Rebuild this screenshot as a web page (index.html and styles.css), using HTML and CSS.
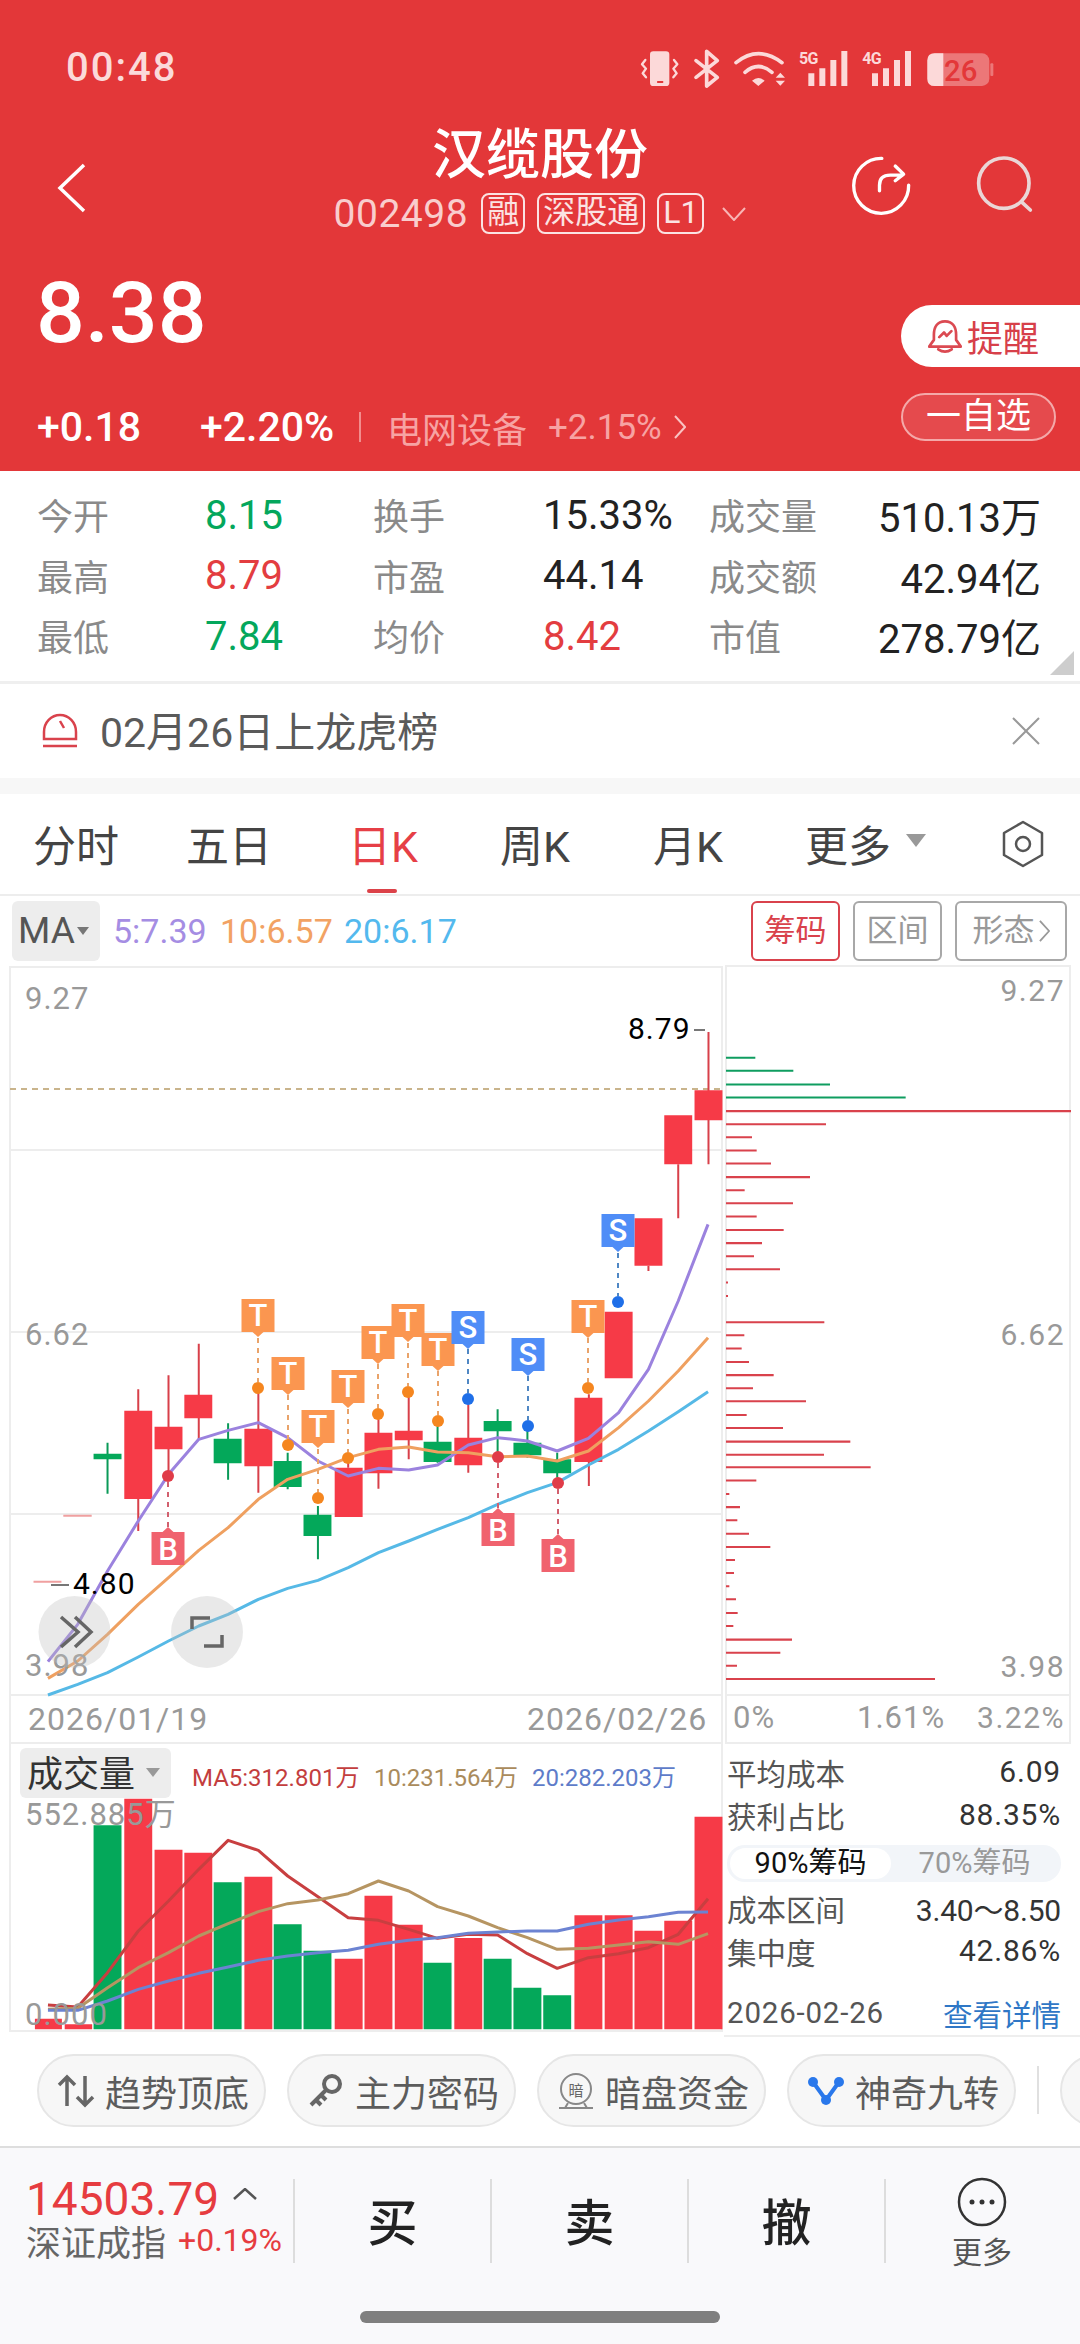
FILE: index.html
```html
<!DOCTYPE html>
<html lang="zh-CN">
<head>
<meta charset="utf-8">
<title>汉缆股份</title>
<link rel="stylesheet" href="styles.css">
</head>
<body>
<div class="app">
  <header class="top">
    <div class="status">
      <span class="time">00:48</span>
      <svg class="status-icons" viewBox="0 0 1110 180" width="370" height="60">
        <rect class="si-fill" x="60" y="34" width="58" height="104" rx="10"/>
        <rect class="si-slot" x="81" y="123" width="19" height="6" rx="2"/>
        <path class="si-line" d="M46 60 36 73 48 86 38 100 48 112M132 60 142 73 130 86 140 100 130 112"/>
        <path class="si-line thick" d="M198 62 262 112 230 138V34L262 62 198 112"/>
        <path class="si-line thick" d="M318 68Q385 14 456 68M345 97Q385 62 426 97"/>
        <path class="si-fill" d="M366 122Q385 106 404 122L385 138ZM437 113 451 98 465 113ZM437 122H465L451 137Z"/>
        <text class="si-net" x="507" y="72">5G</text>
        <path class="si-fill" d="M535 100h18v38h-18zM568 85h18v53h-18zM601 60h18v78h-18zM634 33h18v105h-18z"/>
        <text class="si-net" x="697" y="72">4G</text>
        <path class="si-fill" d="M726 100h18v38h-18zM759 85h18v53h-18zM792 60h18v78h-18zM825 33h18v105h-18z"/>
        <rect class="si-batt" x="892" y="40" width="186" height="98" rx="22"/>
        <rect class="si-batt" x="1081" y="70" width="9" height="38" rx="3"/>
        <path class="si-fill" d="M914 40H940V138H914Q892 138 892 116V62Q892 40 914 40Z"/>
        <text class="si-level" x="992" y="122">26</text>
      </svg>
    </div>
    <div class="nav">
      <svg class="back" viewBox="0 0 30 50" width="30" height="50"><path d="M27 2 3 25 27 48"/></svg>
      <div class="name">
        <h1>汉缆股份</h1>
        <div class="sub">
          <span class="code">002498</span>
          <span class="tag">融</span>
          <span class="tag">深股通</span>
          <span class="tag">L1</span>
          <svg class="sub-arrow" viewBox="0 0 24 14" width="24" height="14"><path d="M1 1 12 13 23 1"/></svg>
        </div>
      </div>
      <div class="actions">
        <svg viewBox="30 15 185 185" width="62" height="62" class="share"><path d="M125 25A82 82 0 1 0 205 105M118 122V105Q118 75 150 75H185M165 48 190 72 165 92"/></svg>
        <svg viewBox="405 20 170 175" width="57" height="58" class="search"><circle cx="488" cy="105" r="76"/><path d="M542 162 568 186"/></svg>
      </div>
    </div>
    <div class="quote">
      <div class="quote-left">
        <div class="price">8.38</div>
        <div class="change">
          <span class="chg-a">+0.18</span>
          <span class="chg-b">+2.20%</span>
          <span class="sector">电网设备</span>
          <span class="sector-chg">+2.15%</span>
          <svg class="sector-arrow" viewBox="0 0 12 24" width="12" height="24"><path d="M1 1 11 12 1 23"/></svg>
        </div>
      </div>
      <div class="quote-right">
        <div class="remind">
          <svg viewBox="265 508 100 104" width="34" height="35"><path d="M315 515C290 515 282 535 282 555V570L268 590H362L348 570V555C348 535 340 515 315 515ZM295 598Q315 612 335 598M298 562 312 548 320 558 334 544"/></svg>
          <span>提醒</span>
        </div>
        <div class="watch">一自选</div>
      </div>
    </div>
  </header>

  <section class="stats">
    <span class="lb">今开</span><span class="val green">8.15</span><span class="lb">换手</span><span class="val">15.33%</span><span class="lb">成交量</span><span class="val end">510.13万</span>
    <span class="lb">最高</span><span class="val red">8.79</span><span class="lb">市盈</span><span class="val">44.14</span><span class="lb">成交额</span><span class="val end">42.94亿</span>
    <span class="lb">最低</span><span class="val green">7.84</span><span class="lb">均价</span><span class="val red">8.42</span><span class="lb">市值</span><span class="val end">278.79亿</span>
    <i class="corner"></i>
  </section>

  <section class="alert">
    <svg viewBox="0 0 38 38" width="38" height="38"><path d="M3 27V20A16 17 0 0 1 35 20V27ZM2 34H36M19 9 23 16"/></svg>
    <span class="alert-text">02月26日上龙虎榜</span>
    <svg class="alert-x" viewBox="0 0 28 28" width="28" height="28"><path d="M1 1 27 27M27 1 1 27"/></svg>
  </section>

  <nav class="tabs">
    <span class="tab t1">分时</span>
    <span class="tab t2">五日</span>
    <span class="tab t3 on">日K</span>
    <span class="tab t4">周K</span>
    <span class="tab t5">月K</span>
    <span class="tab t6">更多</span>
    <i class="tab-caret"></i>
    <svg class="hex" viewBox="0 0 44 48" width="44" height="48"><path d="M22 2 41 13V35L22 46 3 35V13Z"/><circle cx="22" cy="24" r="7"/></svg>
  </nav>

  <section class="ma">
    <div class="ma-btn"><span>MA</span><i></i></div>
    <span class="m5">5:7.39</span>
    <span class="m10">10:6.57</span>
    <span class="m20">20:6.17</span>
    <div class="ma-right">
      <span class="chip-s on">筹码</span>
      <span class="chip-s">区间</span>
      <span class="chip-s wide">形态<svg viewBox="0 0 12 24" width="11" height="22"><path d="M1 1 11 12 1 23"/></svg></span>
    </div>
  </section>

  <section class="charts">
    <svg class="left-chart" viewBox="0 964 724 1068" width="724" height="1068">
      <path class="frame" d="M10 966H722V2030H10ZM10 1149H722M10 1331H722M10 1513H722M10 1694H722M10 1742H722"/>
      <path class="last" d="M10 1088H722"/>
      <text class="ax" x="25" y="1008">9.27</text>
      <text class="ax" x="25" y="1344">6.62</text>
      <g transform="translate(0 1340) scale(.4655 .33333)">
        <path class="wick-r" d="M297 145V570M362 103V420M427 8V295M555 150V455M748 360V380M813 235V443M878 165V355M1006 190V395M1265 160V435M1393 -226V-210M1457 -530V-368M1522 -927V-530"/>
        <path class="wick-g" d="M231 305V458M490 247V416M618 335V445M683 495V655M940 255V365M1069 205V335M1133 270V350M1197 335V410"/>
        <path class="wick-p" d="M136 524H197M72 722H132"/>
        <path class="body-g" d="M201 338h60v17h-60zM459 293h60v74h-60zM588 360h60v78h-60zM652 521h60v64h-60zM910 302h60v61h-60zM1039 240h60v31h-60zM1103 305h60v38h-60zM1167 355h60v42h-60z"/>
        <path class="body-r" d="M267 209h60v265h-60zM332 257h60v68h-60zM396 161h60v71h-60zM525 263h60v113h-60zM719 380h60v148h-60zM783 275h60v122h-60zM848 269h60v29h-60zM976 290h60v83h-60zM1234 170h60v193h-60zM1299 -88h60v200h-60zM1363 -368h60v142h-60zM1427 -677h60v147h-60zM1492 -752h60v90h-60z"/>
        <polyline class="ln lp" points="103,962 167,850 231,690 297,540 362,400 427,295 490,268 555,245 618,290 683,360 748,405 813,382 878,387 940,372 1006,312 1069,290 1133,300 1197,330 1264,292 1329,215 1393,85 1457,-120 1521,-350"/>
        <polyline class="ln lo" points="103,1012 167,960 231,880 297,790 362,710 427,628 490,560 555,475 618,415 683,385 748,350 813,325 878,318 940,333 1006,335 1069,347 1133,345 1197,360 1264,330 1329,260 1393,180 1457,90 1521,-10"/>
        <polyline class="ln lb2" points="103,1062 167,1030 231,995 297,948 362,900 427,855 490,820 555,775 618,742 683,718 748,680 813,635 878,600 940,565 1006,530 1069,490 1133,455 1197,425 1264,372 1329,325 1393,270 1457,212 1521,152"/>
      </g>

      <path class="dash-o" d="M258 1337V1381M288 1394V1438M318 1448V1491M348 1408V1451M378 1363V1407M408 1342V1385M438 1370V1414M588 1337V1381"/>
      <path class="dash-b" d="M468 1348V1392M528 1375V1419M618 1252V1295"/>
      <path class="dash-r" d="M168 1481V1526M498 1462V1507M558 1488V1533"/>
      <g class="dot-o"><circle cx="258" cy="1387" r="6"/><circle cx="288" cy="1444" r="6"/><circle cx="318" cy="1497" r="6"/><circle cx="348" cy="1457" r="6"/><circle cx="378" cy="1413" r="6"/><circle cx="408" cy="1391" r="6"/><circle cx="438" cy="1420" r="6"/><circle cx="588" cy="1387" r="6"/></g>
      <g class="dot-b"><circle cx="468" cy="1398" r="6"/><circle cx="528" cy="1425" r="6"/><circle cx="618" cy="1301" r="6"/></g>
      <g class="dot-r"><circle cx="168" cy="1475" r="6"/><circle cx="498" cy="1456" r="6"/><circle cx="558" cy="1482" r="6"/></g>

      <g class="flag ft" transform="translate(258 1298)"><path d="M-16.5 0h33v33h-11l-5.500 5-5.500-5h-11z"/><text y="27">T</text></g>
      <g class="flag ft" transform="translate(288 1356)"><path d="M-16.5 0h33v33h-11l-5.500 5-5.500-5h-11z"/><text y="27">T</text></g>
      <g class="flag ft" transform="translate(318 1409)"><path d="M-16.5 0h33v33h-11l-5.500 5-5.500-5h-11z"/><text y="27">T</text></g>
      <g class="flag ft" transform="translate(348 1369)"><path d="M-16.5 0h33v33h-11l-5.500 5-5.500-5h-11z"/><text y="27">T</text></g>
      <g class="flag ft" transform="translate(378 1325)"><path d="M-16.5 0h33v33h-11l-5.500 5-5.500-5h-11z"/><text y="27">T</text></g>
      <g class="flag ft" transform="translate(408 1303)"><path d="M-16.5 0h33v33h-11l-5.500 5-5.500-5h-11z"/><text y="27">T</text></g>
      <g class="flag ft" transform="translate(438 1332)"><path d="M-16.5 0h33v33h-11l-5.500 5-5.500-5h-11z"/><text y="27">T</text></g>
      <g class="flag ft" transform="translate(588 1299)"><path d="M-16.5 0h33v33h-11l-5.500 5-5.500-5h-11z"/><text y="27">T</text></g>
      <g class="flag fs" transform="translate(468 1310)"><path d="M-16.5 0h33v33h-11l-5.500 5-5.500-5h-11z"/><text y="27">S</text></g>
      <g class="flag fs" transform="translate(528 1337)"><path d="M-16.5 0h33v33h-11l-5.500 5-5.500-5h-11z"/><text y="27">S</text></g>
      <g class="flag fs" transform="translate(618 1213)"><path d="M-16.5 0h33v33h-11l-5.500 5-5.500-5h-11z"/><text y="27">S</text></g>
      <g class="flag fb" transform="translate(168 1526)"><path d="M-16.500 5h11l5.500-5 5.500 5h11v33h-33z"/><text y="33">B</text></g>
      <g class="flag fb" transform="translate(498 1507)"><path d="M-16.500 5h11l5.500-5 5.500 5h11v33h-33z"/><text y="33">B</text></g>
      <g class="flag fb" transform="translate(558 1533)"><path d="M-16.500 5h11l5.500-5 5.500 5h11v33h-33z"/><text y="33">B</text></g>

      <text class="mark" x="628" y="1038">8.79</text>
      <path class="mark-dash" d="M694 1029H705M51 1584H69"/>
      <text class="mark" x="73" y="1593">4.80</text>
      <text class="ax" x="25" y="1675">3.98</text>
      <circle class="float" cx="74.500" cy="1631" r="36"/>
      <circle class="float" cx="207" cy="1631" r="36"/>
      <path class="float-ic" d="M61 1616 78 1631 61 1646M75 1616 91 1631 75 1646M192 1628V1617H210M222 1634V1645H204"/>
      <text class="ax date" x="28" y="1729">2026/01/19</text>
      <text class="ax date" x="527" y="1729">2026/02/26</text>

      <g transform="translate(0 1730) scale(.4655 .33333)">
        <path class="body-r" d="M75 863h58v32h-58zM139 880h59v15h-59zM267 203h60v692h-60zM332 356h60v539h-60zM396 365h60v530h-60zM525 437h60v458h-60zM719 683h60v212h-60zM783 494h60v401h-60zM848 581h60v314h-60zM976 621h60v274h-60zM1234 553h60v342h-60zM1299 553h60v342h-60zM1363 599h60v296h-60zM1427 569h60v326h-60zM1492 257h60v638h-60z"/>
        <path class="body-g" d="M201 283h60v612h-60zM459 454h60v441h-60zM588 580h60v315h-60zM652 659h60v236h-60zM910 695h60v200h-60zM1039 683h60v212h-60zM1103 770h60v125h-60zM1167 793h60v102h-60z"/>
        <polyline class="ln vr" points="103,822 167,828 231,725 297,600 362,510 427,415 490,328 555,358 618,435 683,497 748,560 813,568 878,595 940,622 1006,610 1069,612 1133,668 1197,712 1264,680 1329,668 1393,650 1457,610 1521,503"/>
        <polyline class="ln vt" points="103,835 167,832 231,770 297,710 362,665 427,615 490,578 555,542 618,518 683,507 748,488 813,450 878,480 940,527 1006,555 1069,590 1133,620 1197,655 1264,652 1329,642 1393,632 1457,640 1521,608"/>
        <polyline class="ln vb" points="103,838 167,838 231,810 297,775 362,750 427,727 490,708 555,688 618,675 683,665 748,658 813,640 878,628 940,620 1006,607 1069,603 1133,600 1197,600 1264,580 1329,567 1393,557 1457,544 1521,543"/>
      </g>
      <rect class="vol-btn" x="20" y="1747" width="151" height="50" rx="6"/>
      <text class="vol-title" x="27" y="1786">成交量</text>
      <path class="vol-caret" d="M146 1767H160L153 1776Z"/>
      <text class="vm vm1" x="192" y="1785">MA5:312.801万</text>
      <text class="vm vm2" x="374" y="1785">10:231.564万</text>
      <text class="vm vm3" x="532" y="1785">20:282.203万</text>
      <text class="ax" x="25" y="1824">552.885万</text>
      <text class="ax" x="25" y="2024">0.000</text>
    </svg>

    <div class="right-col">
      <svg class="chip-chart" viewBox="724 964 356 780" width="356" height="780">
        <path class="frame" d="M726 965H1070V1742H726ZM726 1694H1070"/>
        <g transform="translate(710 960) scale(.33333 .50380)">
          <path class="chip-g" d="M48 192H136M48 218H250M48 245H360M48 271H587"/>
          <path class="chip-r" d="M48 298H1083M48 324H348M48 350H126M48 376H140M48 402H183M48 429H300M48 455H104M48 481H249M48 507H140M48 534H221M48 560H156M48 586H132M48 612H210M48 638H54M48 665H54M48 717H343M48 743H103M48 769H95M48 796H117M48 822H191M48 848H129M48 874H288M48 901H110M48 927H219M48 954H421M48 980H342M48 1005H482M48 1031H139M48 1058H58M48 1084H90M48 1110H82M48 1137H117M48 1163H181M48 1189H75M48 1215H72M48 1241H58M48 1267H78M48 1294H83M48 1320H70M48 1347H246M48 1373H211M48 1399H81M48 1425H675"/>
        </g>
        <text class="ax end" x="1065" y="1000">9.27</text>
        <text class="ax end" x="1065" y="1344">6.62</text>
        <text class="ax end" x="1065" y="1676">3.98</text>
        <text class="ax" x="733" y="1727">0%</text>
        <text class="ax" x="857" y="1727">1.61%</text>
        <text class="ax end" x="1065" y="1727">3.22%</text>
      </svg>
      <div class="cost">
        <div class="cost-row"><span>平均成本</span><b>6.09</b></div>
        <div class="cost-row"><span>获利占比</span><b>88.35%</b></div>
        <div class="seg"><span class="seg-on">90%筹码</span><span class="seg-off">70%筹码</span></div>
        <div class="cost-row"><span>成本区间</span><b class="tight">3.40～8.50</b></div>
        <div class="cost-row"><span>集中度</span><b>42.86%</b></div>
        <div class="cost-foot"><span>2026-02-26</span><a>查看详情</a></div>
      </div>
    </div>
  </section>

  <section class="pills">
    <div class="pill">
      <svg viewBox="0 0 38 34" width="38" height="34" class="ic-arrows"><path d="M10 32V3M2 11 10 3 18 11M28 2V31M20 23 28 31 36 23"/></svg>
      <span>趋势顶底</span>
    </div>
    <div class="pill">
      <svg viewBox="0 0 38 38" width="38" height="38" class="ic-key"><circle cx="25" cy="12" r="8"/><path d="M19 18 4 33M9 28 14 33M14 23 19 28"/></svg>
      <span>主力密码</span>
    </div>
    <div class="pill">
      <svg viewBox="0 0 38 38" width="38" height="38" class="ic-dark"><circle cx="19" cy="17" r="15"/><path d="M2 36H36M11 31 8 36M27 31 30 36"/><text x="19" y="24">暗</text></svg>
      <span>暗盘资金</span>
    </div>
    <div class="pill">
      <svg viewBox="0 0 38 34" width="38" height="34" class="ic-nine"><path d="M6 8 19 26 32 8"/><circle cx="6" cy="8" r="5"/><circle cx="32" cy="8" r="5"/><circle cx="19" cy="26" r="5"/></svg>
      <span>神奇九转</span>
    </div>
    <i class="pill-sep"></i>
    <div class="pill">
      <svg viewBox="0 0 38 34" width="38" height="34" class="ic-nine"><circle cx="6" cy="17" r="6"/></svg>
    </div>
  </section>

  <footer class="foot">
    <div class="foot-row">
      <div class="index">
        <div class="idx-top"><span class="idx-val">14503.79</span><svg viewBox="0 0 24 12" width="24" height="12"><path d="M1 11 12 1 23 11"/></svg></div>
        <div class="idx-sub"><span class="idx-name">深证成指</span><span class="idx-chg">+0.19%</span></div>
      </div>
      <div class="act">买</div>
      <div class="act">卖</div>
      <div class="act">撤</div>
      <div class="more">
        <svg viewBox="0 0 50 50" width="50" height="50"><circle class="ring" cx="25" cy="25" r="23"/><circle cx="15" cy="25" r="2.500"/><circle cx="25" cy="25" r="2.500"/><circle cx="35" cy="25" r="2.500"/></svg>
        <span>更多</span>
      </div>
    </div>
    <div class="home"></div>
  </footer>
</div>
</body>
</html>
```
FILE: styles.css
```css
* { box-sizing: border-box; }
html, body { margin: 0; padding: 0; background: #fff; }
body { font-family: Roboto, "Noto Sans CJK SC", sans-serif; }
.app { width: 1080px; height: 2344px; overflow: hidden; display: flex; flex-direction: column; }
.app > * { flex: none; }
svg { display: block; flex: none; }
text { font-family: Roboto, "Noto Sans CJK SC", sans-serif; }

/* header */
.top { height: 471px; background: #E33739; color: #fff; display: flex; flex-direction: column; }
.status { height: 100px; padding: 40px 80px 0 66px; display: flex; justify-content: space-between; align-items: flex-start; }
.time { font-size: 40px; line-height: 56px; font-weight: 500; letter-spacing: 2px; color: #FBDADA; }
.si-fill { fill: #FCD9D9; }
.si-slot { fill: #E33739; }
.si-line { fill: none; stroke: #FCD9D9; stroke-width: 7; stroke-linecap: round; stroke-linejoin: round; }
.si-line.thick { stroke-width: 11; }
.si-net { fill: #FCD9D9; font-size: 48px; font-weight: 700; letter-spacing: -2px; }
.si-batt { fill: rgba(255,255,255,.32); }
.si-level { fill: #E33739; font-size: 88px; font-weight: 500; text-anchor: middle; }

.nav { height: 140px; padding-top: 26px; display: grid; grid-template-columns: 1fr auto 1fr; align-items: start; }
.back { margin: 37px 0 0 57px; }
.back path { fill: none; stroke: #fff; stroke-width: 3.5; }
.name { display: flex; flex-direction: column; align-items: center; }
.name h1 { margin: 0; font-size: 54px; line-height: 60px; font-weight: 500; color: #fff; }
.sub { margin-top: 7px; height: 41px; display: flex; align-items: center; gap: 12px; padding-right: 0; }
.code { font-size: 39px; color: #F9CDCD; letter-spacing: .5px; margin-right: 1px; }
.tag { height: 41px; padding: 0 4px; border: 2px solid #FBE3E3; border-radius: 8px; font-size: 32px; line-height: 35px; color: #FBE3E3; }
.sub-arrow { margin-left: 6px; }
.sub-arrow path { fill: none; stroke: #F9B5B5; stroke-width: 2; }
.actions { display: flex; justify-content: flex-end; gap: 64px; padding: 29px 47px 0 0; }
.share path { fill: none; stroke: #fff; stroke-width: 10; stroke-linecap: round; stroke-linejoin: round; }
.search circle, .search path { fill: none; stroke: #EAD6D6; stroke-width: 11; stroke-linecap: round; }

.quote { flex: 1; display: flex; justify-content: space-between; }
.quote-left { padding: 25px 0 0 36px; }
.price { font-size: 86px; line-height: 96px; font-weight: 500; }
.change { display: flex; align-items: center; height: 40px; margin-top: 46px; margin-left: 1px; }
.chg-a { font-size: 41px; font-weight: 500; width: 163px; }
.chg-b { font-size: 41px; font-weight: 500; width: 161px; border-right: 2px solid #F28D8D; line-height: 30px; height: 30px; display: flex; align-items: center; }
.sector { font-size: 35px; color: #F7A3A3; margin-left: 26px; }
.sector-chg { font-size: 35px; color: #F7A3A3; margin-left: 21px; }
.sector-arrow { margin-left: 12px; }
.sector-arrow path { fill: none; stroke: #F9C2C2; stroke-width: 2; }
.quote-right { width: 179px; padding-top: 65px; display: flex; flex-direction: column; gap: 26px; }
.remind { height: 62px; width: 179px; background: #fff; border-radius: 31px 0 0 31px; display: flex; align-items: center; padding-left: 27px; gap: 5px; color: #D7404A; font-size: 36px; }
.remind path { fill: none; stroke: #DB4A52; stroke-width: 8; stroke-linejoin: round; stroke-linecap: round; }
.watch { height: 48px; width: 155px; border: 2px solid #F4A9A9; border-radius: 24px; background: #E54A4D; font-size: 35px; line-height: 43px; text-align: center; color: #fff; }

/* stats */
.stats { position: relative; height: 213px; padding: 14px 0 0 37px; border-bottom: 3px solid #EFEFEF; display: grid; grid-template-columns: 168px 168px 170px 166px 140px 192px; grid-auto-rows: 60.500px; align-items: center; }
.lb { font-size: 36px; color: #8A8A8A; margin-top: -2px; }
.val { font-size: 40px; color: #222; }
.val.end { justify-self: end; }
.green { color: #04A75C; }
.red { color: #E33D40; }
.corner { position: absolute; right: 6px; bottom: 6px; width: 24px; height: 24px; background: #CDCDCD; clip-path: polygon(100% 0, 100% 100%, 0 100%); }

/* alert */
.alert { height: 94px; display: flex; align-items: center; padding: 0 40px 0 41px; gap: 21px; }
.alert path { fill: none; stroke: #D9424C; stroke-width: 2.500; }
.alert-text { flex: 1; font-size: 41px; color: #5A5A5A; margin-top: -5px; }
.alert .alert-x path { stroke: #999; stroke-width: 2; }

/* tabs */
.tabs { position: relative; border-top: 16px solid #F7F7F7; height: 118px; border-bottom: 2px solid #EDEDED; }
.tab { position: absolute; top: 19px; font-size: 43px; line-height: 68px; color: #444; }
.t1 { left: 33px; } .t2 { left: 186px; } .t3 { left: 348px; } .t4 { left: 500px; } .t5 { left: 653px; } .t6 { left: 805px; }
.tab.on { color: #E63F46; }
.tab.on::after { content: ""; position: absolute; left: 19px; top: 76px; width: 30px; height: 4px; background: #DC4249; border-radius: 2px; }
.tab-caret { position: absolute; left: 906px; top: 40px; border: solid transparent; border-width: 13px 10px 0; border-top-color: #999; }
.hex { position: absolute; left: 1001px; top: 26px; }
.hex path, .hex circle { fill: none; stroke: #555; stroke-width: 2.500; stroke-linejoin: round; }

/* MA row */
.ma { height: 69px; padding: 5px 13px 0 12px; display: flex; align-items: flex-start; font-size: 34px; line-height: 60px; }
.ma-btn { width: 88px; height: 60px; background: #EDEDED; border-radius: 6px; padding-left: 6px; display: flex; align-items: center; color: #555; font-size: 37px; margin-right: 13px; }
.ma-btn i { margin-left: 2px; border: solid transparent; border-width: 8px 6px 0; border-top-color: #777; }
.m5 { color: #A58DE3; width: 107px; }
.m10 { color: #F2A263; width: 124px; }
.m20 { color: #53B9EE; }
.ma-right { margin-left: auto; display: flex; gap: 13px; }
.chip-s { width: 89px; height: 60px; border: 2px solid #A8A8A8; border-radius: 6px; display: flex; align-items: center; justify-content: center; font-size: 31px; color: #999; }
.chip-s.on { border-color: #D9424C; color: #D9424C; }
.chip-s.wide { width: 112px; }
.chip-s path { fill: none; stroke: #999; stroke-width: 2; }
.chip-s svg { margin-left: 4px; }

/* charts */
.charts { height: 1068px; display: flex; }
.frame { fill: none; stroke: #EDEDED; stroke-width: 2; }
.last { fill: none; stroke: #C9B48C; stroke-width: 2; stroke-dasharray: 6 5; }
.ax { font-size: 31px; fill: #999; letter-spacing: 1px; }
.ax.end { font-size: 30px; text-anchor: end; letter-spacing: 1.500px; }
.ax.date { font-size: 32px; letter-spacing: 1px; }
.wick-r, .wick-g, .wick-p, .ln { fill: none; vector-effect: non-scaling-stroke; }
.wick-r { stroke: #D8404A; stroke-width: 2; }
.wick-g { stroke: #0A9A58; stroke-width: 2; }
.wick-p { stroke: #F0A0A0; stroke-width: 2; }
.body-r { fill: #F63A47; }
.body-g { fill: #04A85A; }
.ln { stroke-width: 3; stroke-linejoin: round; }
.lp { stroke: #9B82DE; }
.lo { stroke: #EFA060; }
.lb2 { stroke: #56B9E6; }
.vr { stroke: #C83F40; }
.vt { stroke: #B69562; }
.vb { stroke: #6C83D2; }
.dash-o, .dash-b, .dash-r { fill: none; stroke-width: 2; stroke-dasharray: 5 5; }
.dash-o { stroke: #E9A36A; }
.dash-b { stroke: #4F87C4; }
.dash-r { stroke: #D2606E; }
.dot-o { fill: #F5861F; }
.dot-b { fill: #1F6FE8; }
.dot-r { fill: #E03C48; }
.flag text { fill: #FFF; font-size: 31px; font-weight: 500; text-anchor: middle; }
.ft path { fill: #FB9650; }
.fs path { fill: #4F8DF7; }
.fb path { fill: #F0626E; }
.mark { font-size: 30px; fill: #000; letter-spacing: 1px; }
.mark-dash { fill: none; stroke: #777; stroke-width: 2; }
.float { fill: rgba(190,190,190,.34); }
.float-ic { fill: none; stroke: #666; stroke-width: 3.500; }
.vol-btn { fill: #EDEDED; }
.vol-title { font-size: 36px; fill: #333; }
.vol-caret { fill: #999; }
.vm { font-size: 24px; }
.vm1 { fill: #C33E3E; }
.vm2 { fill: #AA8B5C; }
.vm3 { fill: #5E7CC9; }

.right-col { width: 356px; display: flex; flex-direction: column; }
.chip-chart { height: 780px; }
.chip-g { fill: none; stroke: #0F9D60; stroke-width: 4; }
.chip-r { fill: none; stroke: #D9424C; stroke-width: 4; }
.cost { flex: 1; padding: 5px 19px 0 3px; border-bottom: 2px solid #EEE; font-size: 29.500px; color: #555; }
.cost-row { height: 43px; display: flex; justify-content: space-between; align-items: center; }
.cost-row b { font-weight: 400; font-size: 30px; color: #333; letter-spacing: .8px; }
.cost-row b.tight { letter-spacing: -.2px; }
.seg { height: 37px; margin: 9px 0 4px; padding: 3px; background: #F2F5F9; border-radius: 18px; display: flex; font-size: 29px; line-height: 31px; }
.seg-on { width: 161px; background: #fff; border-radius: 16px; text-align: center; color: #111; }
.seg-off { flex: 1; text-align: center; color: #999; }
.cost-foot { margin-top: 19px; height: 44px; display: flex; justify-content: space-between; align-items: center; letter-spacing: .8px; }
.cost-foot a { color: #2F77C6; letter-spacing: 0; }

/* pills */
.pills { height: 113px; padding: 21px 0 0 37px; display: flex; gap: 21px; overflow: hidden; }
.pill { flex: none; width: 229px; height: 73px; background: #F7F7F7; border: 2px solid #E6E6E6; border-radius: 37px; display: flex; align-items: center; padding-left: 18px; gap: 10px; font-size: 36px; color: #5C5C5C; }
.pill-sep { flex: none; width: 2px; height: 48px; margin-top: 12px; background: #E0E0E0; }
.ic-arrows path { fill: none; stroke: #666; stroke-width: 3.500; }
.ic-key circle, .ic-key path { fill: none; stroke: #666; stroke-width: 4; }
.ic-dark circle, .ic-dark path { fill: none; stroke: #888; stroke-width: 2; }
.ic-dark text { font-size: 15px; text-anchor: middle; fill: #666; }
.ic-nine path { fill: none; stroke: #2A78EB; stroke-width: 4; }
.ic-nine circle { fill: #2A78EB; }

/* footer */
.app > .foot { flex: 1 1 0; min-height: 0; }
.foot { background: #F9F9FB; border-top: 2px solid #DEDEDE; display: flex; flex-direction: column; }
.foot-row { flex: none; margin-top: 31px; height: 84px; display: flex; }
.index { width: 295px; padding-left: 26px; border-right: 2px solid #DDD; }
.idx-top { display: flex; align-items: center; gap: 14px; height: 40px; color: #E63C40; }
.idx-val { font-size: 46px; line-height: 40px; }
.idx-top path { fill: none; stroke: #555; stroke-width: 2.500; }
.idx-top svg { margin-top: -10px; }
.idx-sub { display: flex; align-items: center; height: 42px; gap: 12px; }
.idx-name { font-size: 35px; color: #666; }
.idx-chg { font-size: 32px; color: #E63C40; }
.act { width: 197px; border-right: 2px solid #DDD; display: flex; align-items: center; justify-content: center; padding-bottom: 4px; font-size: 50px; font-weight: 500; color: #222; }
.more { flex: 1; display: flex; flex-direction: column; align-items: center; margin-top: -2px; padding-right: 2px; font-size: 30px; line-height: 40px; color: #555; gap: 6px; }
.more .ring { fill: none; stroke: #333; stroke-width: 2.500; }
.more circle { fill: #333; }
.home { flex: none; width: 360px; height: 12px; margin: 48px auto 0; background: #7F7F7F; border-radius: 6px; }
```
